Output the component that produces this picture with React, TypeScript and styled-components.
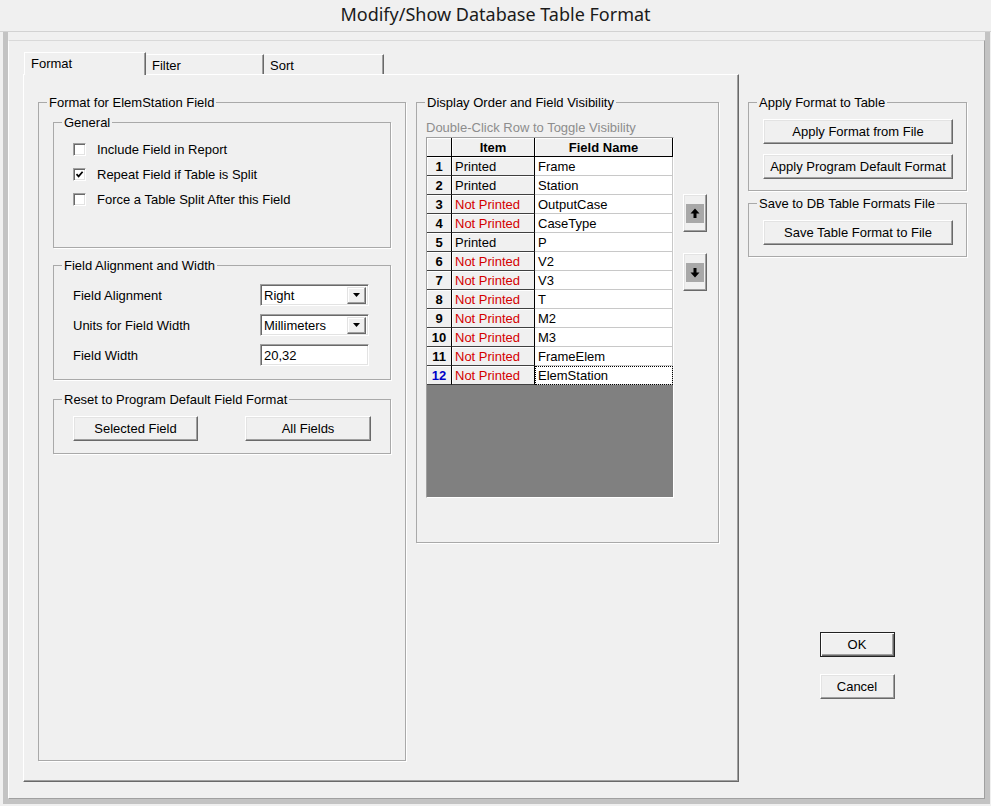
import React from "react";
import styled, { createGlobalStyle } from "styled-components";

const GlobalStyle = createGlobalStyle`
  html, body {
    margin: 0;
    padding: 0;
    background: #f0f0f0;
  }
  body {
    font-family: "Liberation Sans", Arial, sans-serif;
    font-size: 13px;
    color: #000;
  }
  * {
    box-sizing: border-box;
  }
`;

type Row = { n: number; printed: boolean; name: string };

const rows: Row[] = [
  { n: 1, printed: true, name: "Frame" },
  { n: 2, printed: true, name: "Station" },
  { n: 3, printed: false, name: "OutputCase" },
  { n: 4, printed: false, name: "CaseType" },
  { n: 5, printed: true, name: "P" },
  { n: 6, printed: false, name: "V2" },
  { n: 7, printed: false, name: "V3" },
  { n: 8, printed: false, name: "T" },
  { n: 9, printed: false, name: "M2" },
  { n: 10, printed: false, name: "M3" },
  { n: 11, printed: false, name: "FrameElem" },
  { n: 12, printed: false, name: "ElemStation" },
];

const DropArrow = () => (
  <svg width="7" height="4" viewBox="0 0 7 4">
    <path d="M0 0h7L3.5 4z" fill="#000" />
  </svg>
);

const App = (): JSX.Element => (
  <>
    <GlobalStyle />
    <Window>
      <TitleBar>Modify/Show Database Table Format</TitleBar>
      <Frame>
        <Client>
          <TabControl>
            <TabStrip>
              <Tab $active $w={122}>Format</Tab>
              <Tab $w={118}>Filter</Tab>
              <Tab $w={120}>Sort</Tab>
            </TabStrip>
            <TabPanel>
              <Group $height={666}>
                <Legend>Format for ElemStation Field</Legend>
                <GroupBody $pad="5px 14px 0 14px" $gap={10}>
                  <Group>
                    <Legend>General</Legend>
                    <GroupBody $pad="7px 19px 35px 19px">
                      <CheckRow>
                        <CheckBox />
                        Include Field in Report
                      </CheckRow>
                      <CheckRow>
                        <CheckBox>
                          <svg width="9" height="9" viewBox="0 0 9 9">
                            <path d="M1.5 4.2 L3.6 6.4 L7.6 1.8" stroke="#000" strokeWidth="1.7" fill="none" />
                          </svg>
                        </CheckBox>
                        Repeat Field if Table is Split
                      </CheckRow>
                      <CheckRow>
                        <CheckBox />
                        Force a Table Split After this Field
                      </CheckRow>
                    </GroupBody>
                  </Group>

                  <Group>
                    <Legend>Field Alignment and Width</Legend>
                    <FormGrid>
                      <span>Field Alignment</span>
                      <Combo>
                        <ComboText>Right</ComboText>
                        <DropButton>
                          <DropArrow />
                        </DropButton>
                      </Combo>
                      <span>Units for Field Width</span>
                      <Combo>
                        <ComboText>Millimeters</ComboText>
                        <DropButton>
                          <DropArrow />
                        </DropButton>
                      </Combo>
                      <span>Field Width</span>
                      <Combo>
                        <ComboText>20,32</ComboText>
                      </Combo>
                    </FormGrid>
                  </Group>

                  <Group $mt={2}>
                    <Legend>Reset to Program Default Field Format</Legend>
                    <GroupBody $pad="9px 19px 12px 19px" $row $gap={47}>
                      <Button $w={125}>Selected Field</Button>
                      <Button $w={126}>All Fields</Button>
                    </GroupBody>
                  </Group>
                </GroupBody>
              </Group>

              <Group $height={448} $w={303}>
                <Legend>Display Order and Field Visibility</Legend>
                <GroupBody $pad="10px 9px 0 9px">
                  <Hint>Double-Click Row to Toggle Visibility</Hint>
                  <GridArea>
                    <GridFrame>
                      <DataGrid>
                        <HeadCell />
                        <HeadCell>Item</HeadCell>
                        <HeadCell>Field Name</HeadCell>
                        {rows.map((r) => (
                          <React.Fragment key={r.n}>
                            <NumCell $current={r.n === 12}>{r.n}</NumCell>
                            <ItemCell $printed={r.printed}>
                              {r.printed ? "Printed" : "Not Printed"}
                            </ItemCell>
                            <NameCell $focus={r.n === 12}>{r.name}</NameCell>
                          </React.Fragment>
                        ))}
                      </DataGrid>
                    </GridFrame>
                    <ArrowColumn>
                      <ArrowButton>
                        <svg width="18" height="19" viewBox="0 0 18 19">
                          <rect width="18" height="19" fill="#a8a8a8" />
                          <path d="M9 4.5 L4.5 9.5 H7.5 V14 H10.5 V9.5 H13.5 Z" fill="#000" />
                        </svg>
                      </ArrowButton>
                      <ArrowButton>
                        <svg width="18" height="19" viewBox="0 0 18 19">
                          <rect width="18" height="19" fill="#a8a8a8" />
                          <path d="M9 14.5 L4.5 9.5 H7.5 V5 H10.5 V9.5 H13.5 Z" fill="#000" />
                        </svg>
                      </ArrowButton>
                    </ArrowColumn>
                  </GridArea>
                </GroupBody>
              </Group>
            </TabPanel>
          </TabControl>

          <SideColumn>
            <Group>
              <Legend>Apply Format to Table</Legend>
              <GroupBody $pad="9px 14px 11px 14px" $gap={10}>
                <Button $w={190}>Apply Format from File</Button>
                <Button $w={190}>Apply Program Default Format</Button>
              </GroupBody>
            </Group>
            <Group $mt={5}>
              <Legend>Save to DB Table Formats File</Legend>
              <GroupBody $pad="9px 14px 11px 14px">
                <Button $w={190}>Save Table Format to File</Button>
              </GroupBody>
            </Group>
            <DialogButtons>
              <Button $w={75} $default>
                OK
              </Button>
              <Button $w={75}>Cancel</Button>
            </DialogButtons>
          </SideColumn>
        </Client>
      </Frame>
    </Window>
  </>
);

const Window = styled.div`
  width: 991px;
  height: 806px;
  display: flex;
  flex-direction: column;
  background: #f0f0f0;
  overflow: hidden;
`;

const TitleBar = styled.div`
  height: 32px;
  flex: none;
  display: flex;
  align-items: center;
  justify-content: center;
  padding-bottom: 4px;
  font-family: "Noto Sans", "Open Sans", sans-serif;
  font-size: 18px;
  color: #1b1b1b;
  border-bottom: 1px solid #d2d2d2;
`;

const Frame = styled.div`
  flex: 1;
  display: flex;
  margin: 0 1px 2px 3px;
  padding-top: 8px;
  border: 5px solid #c3c3c3;
  border-top: 0;
`;

const Client = styled.div`
  flex: 1;
  display: flex;
  align-items: flex-start;
  gap: 9px;
  padding: 11px 0 0 14px;
  border-top: 1px solid #d9d9d9;
  border-left: 1px solid #fdfdfd;
  border-right: 1px solid #a0a0a0;
  border-bottom: 1px solid #a0a0a0;
`;

const TabControl = styled.div`
  width: 716px;
  height: 730px;
  display: flex;
  flex-direction: column;
`;

const TabStrip = styled.div`
  height: 22px;
  display: flex;
  align-items: flex-end;
  padding-left: 1px;
`;

const Tab = styled.div<{ $active?: boolean; $w: number }>`
  position: relative;
  z-index: 1;
  display: flex;
  align-items: center;
  width: ${(p) => p.$w}px;
  height: ${(p) => (p.$active ? 23 : 20)}px;
  margin-bottom: ${(p) => (p.$active ? -1 : 0)}px;
  padding-left: ${(p) => (p.$active ? 6 : 5)}px;
  padding-bottom: ${(p) => (p.$active ? 1 : 0)}px;
  padding-top: ${(p) => (p.$active ? 0 : 1)}px;
  background: #f0f0f0;
  border-top: 1px solid #fff;
  border-left: 1px solid ${(p) => (p.$active ? "#fff" : "transparent")};
  border-right: 1px solid #696969;
  box-shadow: inset -1px 0 #a0a0a0;
`;

const TabPanel = styled.div`
  flex: 1;
  display: flex;
  align-items: flex-start;
  gap: 10px;
  padding: 20px 18px 0 14px;
  border: 1px solid;
  border-color: #fff #696969 #696969 #fff;
  box-shadow: inset -1px -1px #a0a0a0;
`;

const Group = styled.fieldset<{ $height?: number; $w?: number; $mt?: number }>`
  margin: ${(p) => p.$mt ?? 0}px 0 0 0;
  padding: 0;
  min-width: 0;
  border: 1px solid #a9a9a9;
  box-shadow: 1px 1px 0 #fff;
  ${(p) => (p.$height ? `height: ${p.$height}px;` : "")}
  ${(p) => (p.$w ? `width: ${p.$w}px;` : "")}
`;

const Legend = styled.legend`
  margin-left: 8px;
  padding: 0 2px;
  line-height: 15px;
  font-size: 13px;
`;

const GroupBody = styled.div<{ $pad: string; $gap?: number; $row?: boolean }>`
  display: flex;
  flex-direction: ${(p) => (p.$row ? "row" : "column")};
  gap: ${(p) => p.$gap ?? 0}px;
  padding: ${(p) => p.$pad};
`;

const CheckRow = styled.label`
  display: flex;
  align-items: center;
  gap: 11px;
  height: 25px;
`;

const CheckBox = styled.span`
  width: 13px;
  height: 13px;
  display: flex;
  align-items: center;
  justify-content: center;
  background: #fff;
  border: 1px solid;
  border-color: #a0a0a0 #fff #fff #a0a0a0;
  box-shadow: inset 1px 1px #696969, inset -1px -1px #e3e3e3;
`;

const FormGrid = styled.div`
  display: grid;
  grid-template-columns: 187px 109px;
  grid-auto-rows: 22px;
  row-gap: 8px;
  align-items: center;
  padding: 11px 19px 13px 19px;
`;

const Combo = styled.div`
  height: 22px;
  display: flex;
  align-items: center;
  padding: 2px;
  background: #fff;
  border: 1px solid;
  border-color: #a0a0a0 #fff #fff #a0a0a0;
  box-shadow: inset 1px 1px #696969, inset -1px -1px #e3e3e3;
`;

const ComboText = styled.span`
  flex: 1;
  padding-left: 1px;
  padding-top: 1px;
`;

const DropButton = styled.span`
  width: 19px;
  height: 17px;
  display: flex;
  align-items: center;
  justify-content: center;
  background: #f0f0f0;
  border: 1px solid;
  border-color: #e3e3e3 #696969 #696969 #e3e3e3;
  box-shadow: inset -1px -1px #a0a0a0, inset 1px 1px #fff;
`;

const Button = styled.div<{ $w: number; $default?: boolean }>`
  width: ${(p) => p.$w}px;
  height: 25px;
  display: flex;
  align-items: center;
  justify-content: center;
  background: #f0f0f0;
  border: 1px solid;
  border-color: ${(p) => (p.$default ? "#222" : "#fff #696969 #696969 #fff")};
  box-shadow: ${(p) =>
    p.$default
      ? "inset 1px 1px #fff, inset -1px -1px #696969, inset -2px -2px #a0a0a0"
      : "inset -1px -1px #a0a0a0, inset 1px 1px #e3e3e3"};
  white-space: nowrap;
`;

const Hint = styled.div`
  color: #8d8d8d;
  line-height: 15px;
  margin-bottom: 2px;
`;

const GridArea = styled.div`
  display: flex;
  gap: 9px;
`;

const GridFrame = styled.div`
  width: 248px;
  height: 361px;
  background: #808080;
  border: 1px solid;
  border-color: #a0a0a0 #fff #fff #a0a0a0;
`;

const DataGrid = styled.div`
  display: grid;
  grid-template-columns: 25px 83px 138px;
  grid-auto-rows: 19px;
`;

const HeadCell = styled.div`
  display: flex;
  align-items: center;
  justify-content: center;
  font-weight: bold;
  background: #f0f0f0;
  border-right: 1px solid #000;
  border-bottom: 1px solid #000;
  box-shadow: inset 1px 1px #fff;
`;

const NumCell = styled(HeadCell)<{ $current?: boolean }>`
  color: ${(p) => (p.$current ? "#0000c8" : "#000")};
  border-bottom-color: #404040;
`;

const ItemCell = styled.div<{ $printed: boolean }>`
  display: flex;
  align-items: center;
  padding-left: 3px;
  background: #f0f0f0;
  color: ${(p) => (p.$printed ? "#000" : "#d40000")};
  border-right: 1px solid #000;
  border-bottom: 1px solid #404040;
  box-shadow: inset 1px 1px #fff;
`;

const NameCell = styled.div<{ $focus?: boolean }>`
  display: flex;
  align-items: center;
  padding-left: 3px;
  background: #fff;
  border-right: 1px solid #c8c8c8;
  border-bottom: 1px solid #c8c8c8;
  ${(p) => (p.$focus ? "outline: 1px dotted #000; outline-offset: -1px;" : "")}
`;

const ArrowColumn = styled.div`
  display: flex;
  flex-direction: column;
  gap: 21px;
  padding-top: 57px;
`;

const ArrowButton = styled.div`
  width: 24px;
  height: 38px;
  display: flex;
  align-items: center;
  justify-content: center;
  background: #f0f0f0;
  border: 1px solid;
  border-color: #fff #696969 #696969 #fff;
  box-shadow: inset -1px -1px #a0a0a0, inset 1px 1px #e3e3e3;
`;

const SideColumn = styled.div`
  width: 219px;
  display: flex;
  flex-direction: column;
  padding-top: 43px;
`;

const DialogButtons = styled.div`
  display: flex;
  flex-direction: column;
  align-items: center;
  gap: 17px;
  margin-top: 375px;
  padding-right: 1px;
`;

export default App;
